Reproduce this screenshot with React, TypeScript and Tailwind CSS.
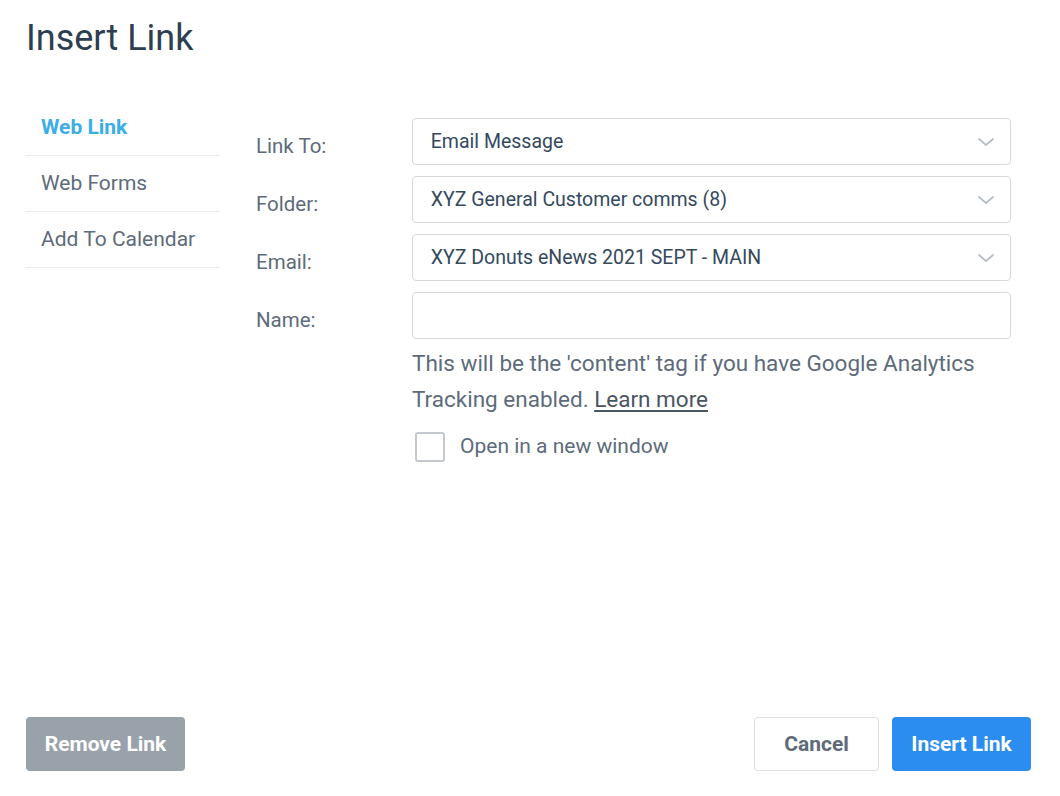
import React from 'react';

const Chevron = () => (
  <svg width="20" height="20" viewBox="0 0 20 20" fill="none" className="shrink-0">
    <path d="M3 7l7 6 7-6" stroke="#b7bec6" strokeWidth="1.8" strokeLinecap="round" strokeLinejoin="round" />
  </svg>
);

const fields = [
  { label: 'Link To:', value: 'Email Message', select: true },
  { label: 'Folder:', value: 'XYZ General Customer comms (8)', select: true },
  { label: 'Email:', value: 'XYZ Donuts eNews 2021 SEPT - MAIN', select: true },
  { label: 'Name:', value: '', select: false },
];

const tabs = ['Web Link', 'Web Forms', 'Add To Calendar'];

export default function App() {
  return (
    <div className="w-[1060px] h-[796px] bg-white flex flex-col font-['Roboto',sans-serif] text-[#5d6b7b]">
      <h1 className="pl-[26px] pt-[16px] text-[36px] leading-[44px] text-[#2c3e50]">Insert Link</h1>

      <div className="flex flex-1 pl-[26px] pt-[40px]">
        <nav className="w-[194px] flex flex-col">
          {tabs.map((t, i) => (
            <div
              key={t}
              className={`pl-[15px] h-[56px] flex items-center border-b border-[#e8ebee] text-[21px] ${
                i === 0 ? 'font-bold text-[#3aaee5]' : 'text-[#5d6b7b]'
              }`}
            >
              {t}
            </div>
          ))}
        </nav>

        <div className="flex flex-col ml-[36px] pt-[18px] w-[755px]">
          {fields.map((f) => (
            <div key={f.label} className="flex items-center mb-[11px]">
              <div className="w-[156px] text-[20.5px] pt-[9px]">{f.label}</div>
              <div className="w-[600px] h-[47px] border border-[#d5d9de] rounded-[4px] flex items-center justify-between pl-[18px] pr-[14px] text-[19.5px] text-[#34495e]">
                <span className="pt-[1px]">{f.value}</span>
                {f.select && <Chevron />}
              </div>
            </div>
          ))}
          <div className="ml-[156px] -mt-[5px] text-[22.5px] leading-[36px] text-[#5d6b7b]">
            This will be the 'content' tag if you have Google Analytics
            <br />
            Tracking enabled. <span className="underline underline-offset-[3px] text-[#4a5563]">Learn more</span>
          </div>
          <div className="ml-[159px] mt-[14px] flex items-center gap-[15px]">
            <div className="w-[30px] h-[30px] border-2 border-[#c3c9cf] rounded-[3px]" />
            <span className="text-[21px] text-[#5d6b7b]">Open in a new window</span>
          </div>
        </div>
      </div>

      <div className="flex items-center justify-between pl-[26px] pr-[29px] pb-[25px]">
        <button className="w-[159px] h-[54px] pt-[2px] rounded-[4px] bg-[#99a1ab] text-white font-bold text-[21px]">
          Remove Link
        </button>
        <div className="flex gap-[13px]">
          <button className="w-[125px] h-[54px] pt-[2px] rounded-[4px] border border-[#dcdfe3] bg-white text-[#5d6b7b] font-bold text-[21px]">
            Cancel
          </button>
          <button className="w-[139px] h-[54px] pt-[2px] rounded-[4px] bg-[#2a8def] text-white font-bold text-[21px]">
            Insert Link
          </button>
        </div>
      </div>
    </div>
  );
}
